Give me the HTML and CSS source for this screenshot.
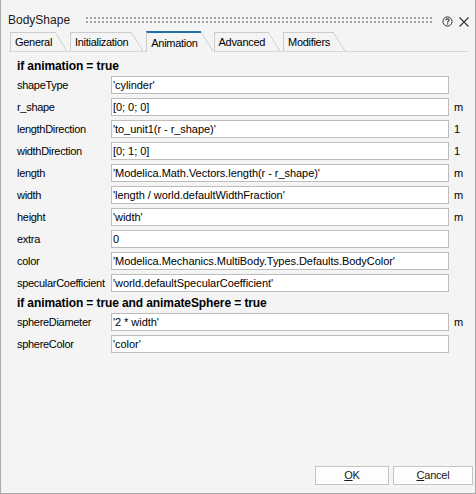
FILE: index.html
```html
<!DOCTYPE html>
<html>
<head>
<meta charset="utf-8">
<link rel="stylesheet" href="styles.css">
</head>
<body>
<div class="window">
  <div class="titlebar">
    <span class="title">BodyShape</span>
    <span class="grip"></span>
    <svg class="help" width="11" height="11" viewBox="0 0 11 11">
      <circle cx="5.5" cy="5.5" r="4.6" fill="none" stroke="#333" stroke-width="1"/>
      <path d="M3.9 4.3 C3.9 3.2 4.7 2.9 5.5 2.9 C6.4 2.9 7.1 3.4 7.1 4.2 C7.1 5.1 5.6 5.3 5.6 6.4" fill="none" stroke="#333" stroke-width="1.1"/>
      <rect x="5" y="7.3" width="1.2" height="1.2" fill="#333"/>
    </svg>
    <svg class="close" width="10" height="10" viewBox="0 0 10 10">
      <path d="M0.5 0.5 L9.5 9.5 M9.5 0.5 L0.5 9.5" stroke="#333" stroke-width="1.1"/>
    </svg>
  </div>

  <div class="tabs">
    <div class="tab"><span class="tab-label">General</span><span class="tab-slant"></span></div>
    <div class="tab"><span class="tab-label">Initialization</span><span class="tab-slant"></span></div>
    <div class="tab active"><span class="tab-label">Animation</span><span class="tab-slant"></span></div>
    <div class="tab"><span class="tab-label">Advanced</span><span class="tab-slant"></span></div>
    <div class="tab"><span class="tab-label">Modifiers</span><span class="tab-slant"></span></div>
  </div>

  <div class="panel">
    <div class="hdr hdr1">if animation = true</div>
    <div class="row"><span class="lbl">shapeType</span><span class="field">'cylinder'</span><span class="unit"></span></div>
    <div class="row"><span class="lbl">r_shape</span><span class="field">[0; 0; 0]</span><span class="unit">m</span></div>
    <div class="row"><span class="lbl">lengthDirection</span><span class="field">'to_unit1(r - r_shape)'</span><span class="unit">1</span></div>
    <div class="row"><span class="lbl">widthDirection</span><span class="field">[0; 1; 0]</span><span class="unit">1</span></div>
    <div class="row"><span class="lbl">length</span><span class="field">'Modelica.Math.Vectors.length(r - r_shape)'</span><span class="unit">m</span></div>
    <div class="row"><span class="lbl">width</span><span class="field">'length / world.defaultWidthFraction'</span><span class="unit">m</span></div>
    <div class="row"><span class="lbl">height</span><span class="field">'width'</span><span class="unit">m</span></div>
    <div class="row"><span class="lbl">extra</span><span class="field">0</span><span class="unit"></span></div>
    <div class="row"><span class="lbl">color</span><span class="field">'Modelica.Mechanics.MultiBody.Types.Defaults.BodyColor'</span><span class="unit"></span></div>
    <div class="row"><span class="lbl">specularCoefficient</span><span class="field">'world.defaultSpecularCoefficient'</span><span class="unit"></span></div>
    <div class="hdr hdr2">if animation = true and animateSphere = true</div>
    <div class="row"><span class="lbl">sphereDiameter</span><span class="field">'2 * width'</span><span class="unit">m</span></div>
    <div class="row"><span class="lbl">sphereColor</span><span class="field">'color'</span><span class="unit"></span></div>
  </div>

  <div class="buttons">
    <button class="btn btn-ok"><u>O</u>K</button>
    <button class="btn btn-cancel"><u>C</u>ancel</button>
  </div>
</div>
</body>
</html>
```

FILE: styles.css
```css
html, body {
  margin: 0;
  padding: 0;
  background: #f4f4f4;
}

.window {
  box-sizing: border-box;
  width: 476px;
  height: 494px;
  background: #f4f4f4;
  border: 1px solid #ababab;
  border-top: none;
  display: flex;
  flex-direction: column;
  font-family: "Liberation Sans", Arial, sans-serif;
  font-size: 11px;
  letter-spacing: -0.3px;
  color: #000000;
}

/* title bar */
.titlebar {
  height: 31px;
  box-sizing: border-box;
  padding: 9px 0 0 7px;
  display: flex;
  align-items: flex-start;
}
.title {
  font-size: 12px;
  letter-spacing: 0;
  line-height: 22px;
  height: 22px;
  color: #1a1a1a;
}
.grip {
  width: 346px;
  height: 6px;
  margin: 8px 0 0 16px;
  background:
    linear-gradient(90deg, transparent 2px, #f4f4f4 2px) 0 0 / 4px 4px,
    linear-gradient(#a3a3a3 2px, transparent 2px) 0 0 / 4px 4px;
}
.help {
  margin: 7px 0 0 10px;
}
.close {
  margin: 8px 0 0 6px;
}

/* tabs */
.tabs {
  display: flex;
  align-items: flex-end;
  height: 20px;
  margin: 0 7px 0 8px;
  padding-left: 1px;
  border-bottom: 1px solid #d9d9d9;
}
.tab {
  display: flex;
  align-items: flex-end;
  height: 19px;
  margin-right: 3px;
}
.tab-label {
  box-sizing: border-box;
  height: 19px;
  padding: 0 3px 0 4px;
  border-left: 1px solid #cccccc;
  border-top: 1px solid #cccccc;
  line-height: 19px;
  white-space: nowrap;
}
.tab-slant {
  width: 12px;
  height: 19px;
  background: linear-gradient(to top right, transparent calc(50% - 0.6px), #c4c4c4 50%, transparent calc(50% + 0.6px));
}
.tab.active {
  height: 21px;
  margin-bottom: -1px;
  margin-right: 1px;
  background: #f4f4f4;
}
.tab.active .tab-label {
  height: 21px;
  padding-left: 4px;
  border-top: 2px solid #1e6ea7;
  line-height: 20px;
}
.tab.active .tab-slant {
  height: 19px;
  margin-bottom: 1px;
}

/* panel */
.panel {
  flex: 1;
  display: flex;
  flex-direction: column;
  padding: 5px 0 0 16px;
}
.hdr {
  font-weight: bold;
  font-size: 12px;
  letter-spacing: -0.1px;
  white-space: nowrap;
}
.hdr1 {
  height: 19px;
  line-height: 18px;
}
.hdr2 {
  height: 17px;
  line-height: 14px;
}
.row {
  display: flex;
  align-items: center;
  height: 18px;
  margin-bottom: 4px;
}
.lbl {
  width: 94px;
  white-space: nowrap;
}
.field {
  box-sizing: border-box;
  width: 338px;
  height: 18px;
  background: #ffffff;
  border: 1px solid #bdbdbd;
  padding-left: 1px;
  line-height: 16px;
  letter-spacing: -0.05px;
  white-space: nowrap;
  overflow: hidden;
}
.unit {
  padding-left: 5px;
}

/* buttons */
.buttons {
  display: flex;
  justify-content: flex-end;
  gap: 4px;
  padding: 0 2px 8px 0;
}
.btn {
  box-sizing: border-box;
  height: 19px;
  background: #fdfdfd;
  border: 1px solid #c4c4c4;
  border-radius: 0;
  font-family: "Liberation Sans", Arial, sans-serif;
  font-size: 11px;
  letter-spacing: -0.2px;
  color: #1a1a1a;
  padding: 0;
  line-height: 17px;
}
.btn-ok {
  width: 74px;
}
.btn-cancel {
  width: 80px;
}
```
